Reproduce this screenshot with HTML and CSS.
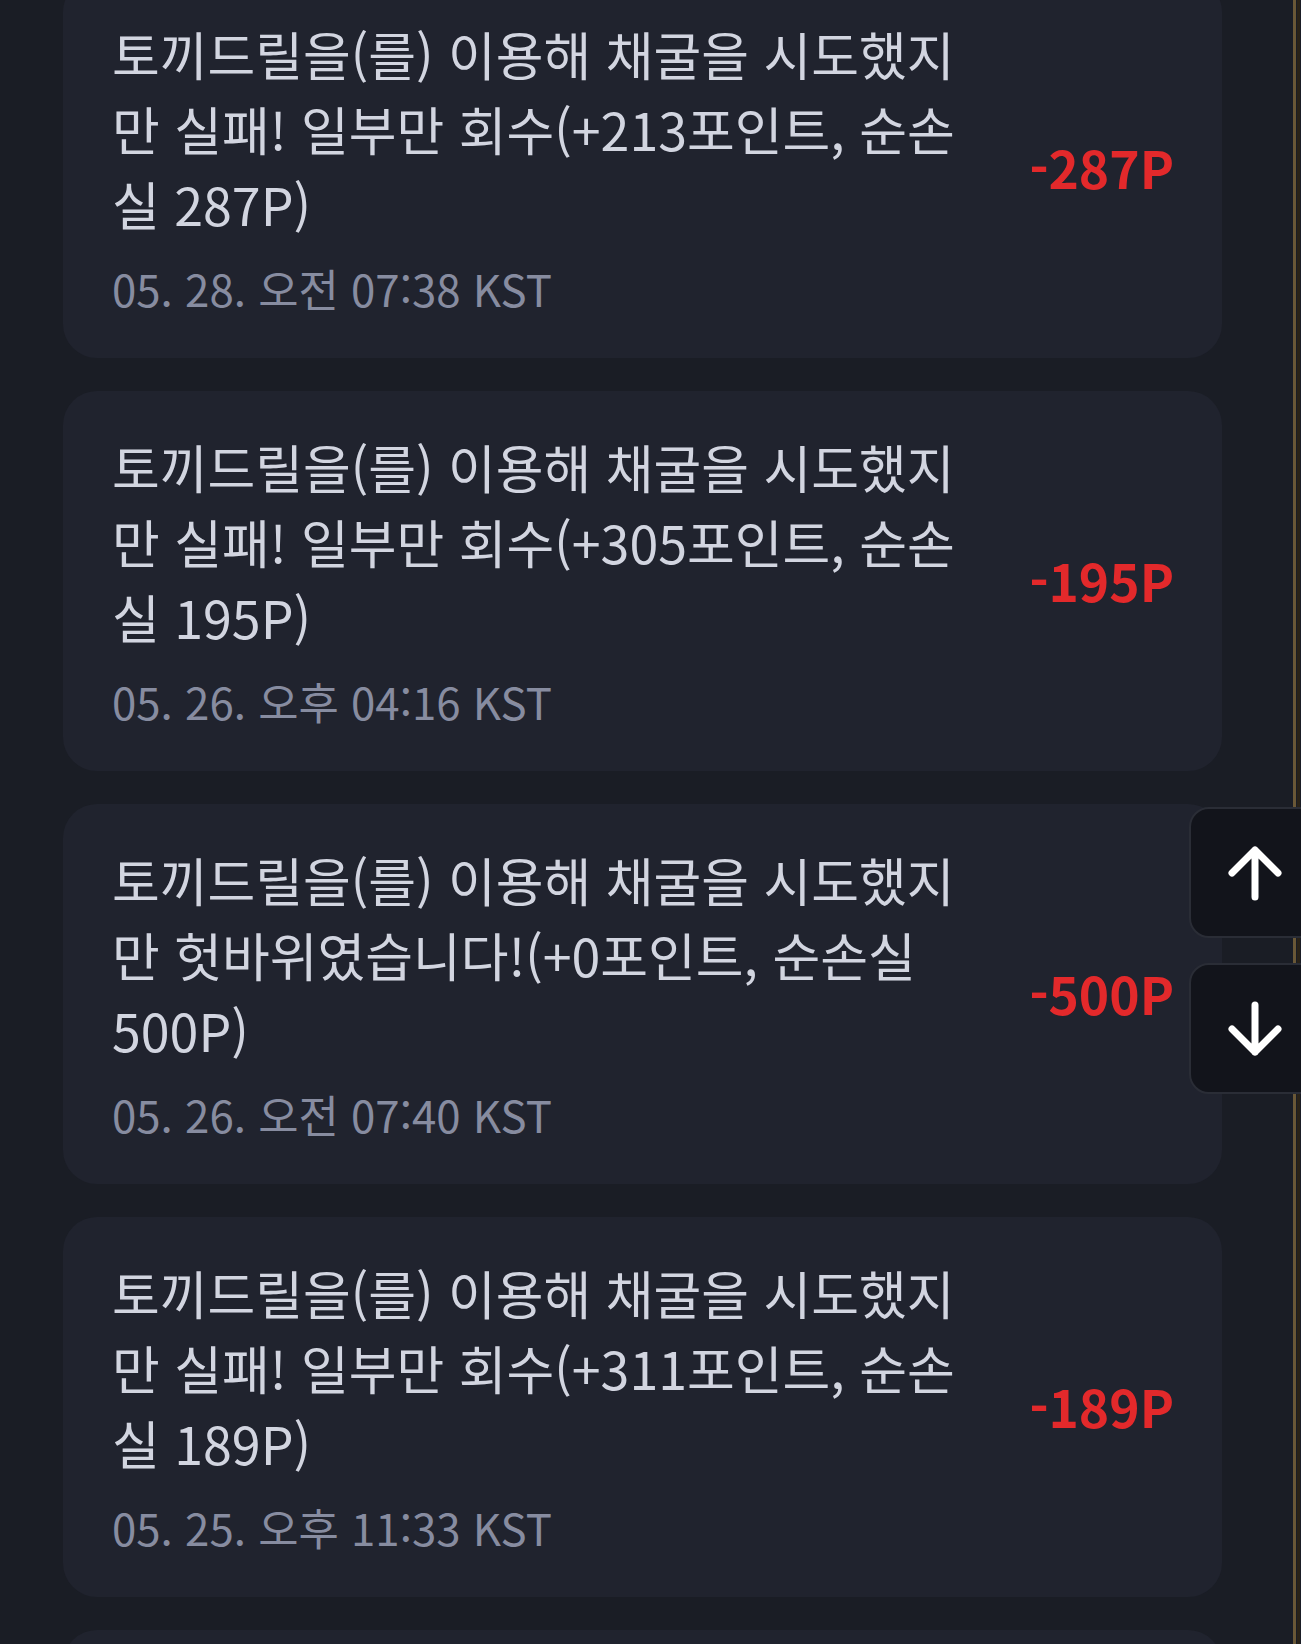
FILE: index.html
```html
<!DOCTYPE html>
<html lang="ko">
<head>
<meta charset="utf-8">
<title>포인트 내역</title>
<link rel="stylesheet" href="styles.css">
</head>
<body>
<div class="app">
  <main class="list">
    <article class="card">
      <div class="body">
        <p class="title">토끼드릴을(를) 이용해 채굴을 시도했지만 실패! 일부만 회수(+213포인트, 순손실 287P)</p>
        <p class="date">05. 28. 오전 07:38 KST</p>
      </div>
      <div class="amount">-287P</div>
    </article>
    <article class="card">
      <div class="body">
        <p class="title">토끼드릴을(를) 이용해 채굴을 시도했지만 실패! 일부만 회수(+305포인트, 순손실 195P)</p>
        <p class="date">05. 26. 오후 04:16 KST</p>
      </div>
      <div class="amount">-195P</div>
    </article>
    <article class="card">
      <div class="body">
        <p class="title">토끼드릴을(를) 이용해 채굴을 시도했지만 헛바위였습니다!(+0포인트, 순손실 500P)</p>
        <p class="date">05. 26. 오전 07:40 KST</p>
      </div>
      <div class="amount">-500P</div>
    </article>
    <article class="card">
      <div class="body">
        <p class="title">토끼드릴을(를) 이용해 채굴을 시도했지만 실패! 일부만 회수(+311포인트, 순손실 189P)</p>
        <p class="date">05. 25. 오후 11:33 KST</p>
      </div>
      <div class="amount">-189P</div>
    </article>
    <article class="card card-peek" aria-hidden="true"></article>
  </main>
  <div class="rail"></div>
  <div class="edge"></div>
</div>
<div class="scroll-btns">
  <button class="scroll-btn up" type="button" aria-label="맨 위로">
    <svg viewBox="0 0 60 60" width="60" height="60" aria-hidden="true"><path d="M30 54V7M7 30L30 7L53 30"/></svg>
  </button>
  <button class="scroll-btn down" type="button" aria-label="맨 아래로">
    <svg viewBox="0 0 60 60" width="60" height="60" aria-hidden="true"><path d="M30 6V53M7 30L30 53L53 30"/></svg>
  </button>
</div>
</body>
</html>
```
FILE: styles.css
```css
html, body {
  margin: 0;
  padding: 0;
  background: #1a1d25;
  height: 1644px;
  overflow: hidden;
}
body {
  font-family: "Noto Sans CJK KR", "Noto Sans", sans-serif;
}
.app {
  display: flex;
  height: 1644px;
  overflow: hidden;
}
.list {
  flex: none;
  width: 1159px;
  padding-left: 63px;
  margin-top: -22px;
  display: flex;
  flex-direction: column;
  gap: 33px;
}
.card {
  flex: none;
  background: #20232e;
  border-radius: 34px;
  padding: 38px 48px 41px 49px;
  display: flex;
  align-items: center;
}
.card-peek {
  height: 300px;
}
.body {
  flex: none;
  width: 865px;
}
.title {
  margin: 0;
  font-size: 51.9px;
  line-height: 75px;
  color: #d2d5e0;
}
.date {
  margin: 18px 0 0;
  font-size: 43.8px;
  line-height: 58px;
  color: #878ca0;
}
.amount {
  flex: 1;
  text-align: right;
  font-size: 51.5px;
  font-weight: 700;
  color: #e3292b;
}
.rail {
  flex: none;
  width: 71px;
}
.edge {
  flex: none;
  width: 3px;
  background: #6a5837;
  box-shadow: 4px 0 0 #2a2318;
}
.scroll-btns {
  position: fixed;
  top: 807px;
  right: -19px;
  display: flex;
  flex-direction: column;
  gap: 25px;
}
.scroll-btn {
  width: 131px;
  height: 131px;
  margin: 0;
  padding: 0;
  border: 2px solid #2a2d36;
  border-radius: 20px;
  background: #12141b;
  display: flex;
  align-items: center;
  justify-content: center;
}
.scroll-btn svg {
  fill: none;
  stroke: #ffffff;
  stroke-width: 7;
  stroke-linecap: round;
  stroke-linejoin: round;
}
```
